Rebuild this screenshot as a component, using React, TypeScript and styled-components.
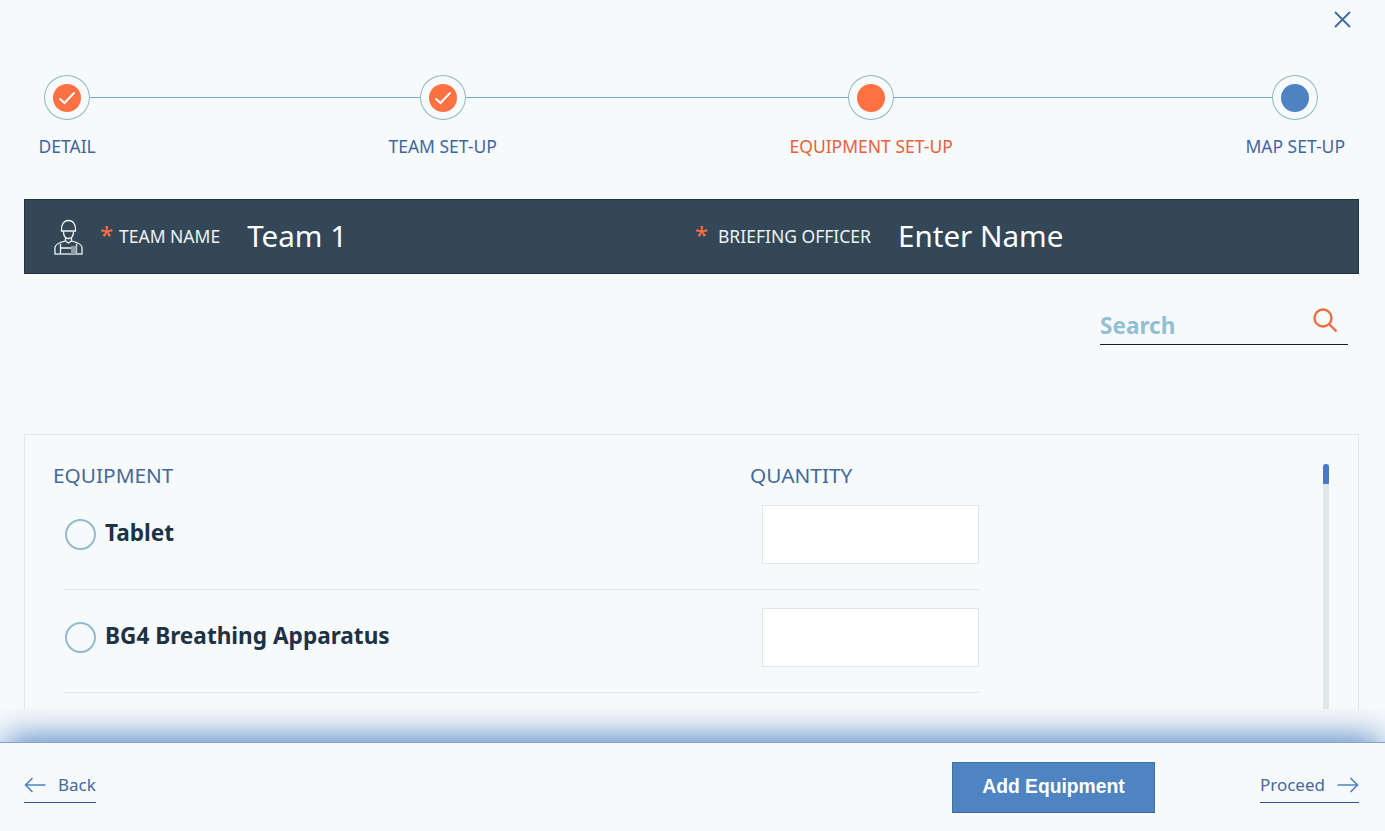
import React from 'react';
import styled, { createGlobalStyle } from 'styled-components';

// ---- palette ----
const PAGE = '#f7fafb';
const ORANGE = '#ff7043';
const BLUE = '#4f82c3';
const TEXT_BLUE = '#3f679f';

const GlobalStyle = createGlobalStyle`
  html, body { margin: 0; padding: 0; background: ${PAGE}; }
  * { box-sizing: border-box; }
`;

const Page = styled.div`
  width: 1385px;
  height: 831px;
  display: flex;
  flex-direction: column;
  overflow: hidden;
  background: ${PAGE};
  font-family: "Noto Sans", "Open Sans", sans-serif;
`;

const Main = styled.div`
  height: 709px;
  flex: none;
  overflow: hidden;
`;

const TopBar = styled.div`
  height: 75px;
  display: flex;
  justify-content: flex-end;
  align-items: flex-start;
  padding: 10px 33px 0 0;
`;

const CloseButton = styled.button`
  width: 19px;
  height: 19px;
  padding: 0;
  border: 0;
  background: none;
  color: #44699f;
  display: block;
`;

const Stepper = styled.div`
  position: relative;
  display: flex;
  justify-content: space-between;
  padding: 0 40px 0 38.5px;
  height: 124px;
`;

const StepLine = styled.div`
  position: absolute;
  top: 22px;
  left: 67px;
  right: 90px;
  height: 1px;
  background: #7ea7b9;
`;

const Step = styled.div`
  position: relative;
  display: flex;
  flex-direction: column;
  align-items: center;
`;

const Ring = styled.div`
  width: 46px;
  height: 45px;
  border: 1px solid #8fb6c2;
  border-radius: 50%;
  background: ${PAGE};
  display: flex;
  align-items: center;
  justify-content: center;
`;

const Dot = styled.div<{ $color: string }>`
  width: 28px;
  height: 28px;
  border-radius: 50%;
  background: ${(p) => p.$color};
  display: flex;
  align-items: center;
  justify-content: center;
`;

const StepLabel = styled.div<{ $active?: boolean }>`
  margin-top: 15px;
  font-size: 17.5px;
  line-height: 22px;
  white-space: nowrap;
  color: ${(p) => (p.$active ? '#e9603a' : TEXT_BLUE)};
`;

const TeamBar = styled.div`
  height: 75px;
  margin: 0 26px 0 24px;
  background: #334756;
  border: 1px solid #22333f;
  display: flex;
  align-items: center;
  padding: 0 0 2px 28px;
  color: #fff;
`;

const WorkerIcon = styled.svg`
  width: 32px;
  height: 36px;
  flex: none;
  margin: 2px 15px 0 0;
`;

const Field = styled.div<{ $width?: number }>`
  display: flex;
  align-items: center;
  width: ${(p) => (p.$width ? `${p.$width}px` : 'auto')};
`;

const Star = styled.span<{ $width: number }>`
  color: ${ORANGE};
  font-size: 24px;
  line-height: 24px;
  width: ${(p) => p.$width}px;
  margin-top: -2px;
`;

const FieldLabel = styled.span`
  font-size: 17.5px;
  color: #eef3f6;
  white-space: nowrap;
`;

const FieldValue = styled.span`
  font-size: 29.6px;
  line-height: 40px;
  color: #fff;
  white-space: nowrap;
  margin-left: 27px;
`;

const SearchRow = styled.div`
  height: 160px;
  display: flex;
  justify-content: flex-end;
  padding: 33px 37px 0 0;
`;

const SearchBox = styled.div`
  width: 248px;
  height: 38px;
  border-bottom: 1px solid #17202a;
  display: flex;
  align-items: flex-start;
  justify-content: space-between;
  padding-right: 10px;
`;

const SearchText = styled.span`
  font-size: 22.6px;
  line-height: 37px;
  font-weight: 700;
  color: #93bfd3;
`;

const SearchIcon = styled.svg`
  width: 25px;
  height: 25px;
  margin-top: 1px;
`;

const Panel = styled.section`
  position: relative;
  margin: 0 26px 0 24px;
  height: 320px;
  border: 1px solid #e0e7e9;
  padding: 28px 0 0 28px;
`;

const ColumnHeads = styled.div`
  display: flex;
  height: 24px;
  font-size: 20.8px;
  line-height: 25px;
  color: #44699a;
`;

const ColumnHead = styled.div<{ $width?: number }>`
  width: ${(p) => (p.$width ? `${p.$width}px` : 'auto')};
`;

const Row = styled.div`
  width: 915px;
  height: 103px;
  margin-left: 11px;
  border-bottom: 1px solid #dfe5e8;
  display: flex;
  align-items: flex-start;
  padding: 18px 0 0 1px;
`;

const Radio = styled.span`
  width: 31px;
  height: 31px;
  margin-top: 14px;
  flex: none;
  border: 2px solid #90bccb;
  border-radius: 50%;
`;

const RowName = styled.span`
  margin: 13px 0 0 9px;
  font-size: 22.6px;
  line-height: 30px;
  font-weight: 700;
  color: #1e3246;
  white-space: nowrap;
`;

const Quantity = styled.input`
  margin-left: auto;
  width: 217px;
  height: 59px;
  background: #fff;
  border: 1px solid #dfe5e8;
  border-radius: 0;
  outline: none;
`;

const ScrollTrack = styled.div`
  position: absolute;
  top: 29px;
  right: 29px;
  bottom: 0;
  width: 6px;
  background: #dfe8e8;
`;

const ScrollThumb = styled.div`
  height: 20px;
  background: #4a78c6;
  border-radius: 3px 3px 1px 1px;
`;

// opaque strip above the footer, the blue glow rises out of the footer edge
const Fade = styled.div`
  position: relative;
  height: 34px;
  flex: none;
  overflow: hidden;
  background: ${PAGE};
  border-bottom: 1px solid #86a3c7;

  &::after {
    content: '';
    position: absolute;
    left: 8px;
    right: 8px;
    top: 100%;
    height: 40px;
    box-shadow: 0 0 34px 3px rgba(61, 116, 190, 0.95);
  }
`;

const Footer = styled.footer`
  flex: 1;
  display: flex;
  align-items: flex-start;
  padding: 19px 26px 0 24px;
`;

const NavLink = styled.a`
  display: flex;
  align-items: center;
  height: 41px;
  padding-top: 5px;
  border-bottom: 1px solid #2b5790;
  font-size: 17px;
  color: #45689f;
`;

const Arrow = styled.svg<{ $side: 'left' | 'right' }>`
  width: 22px;
  height: 16px;
  ${(p) => (p.$side === 'left' ? 'margin-right: 12px;' : 'margin-left: 12px;')}
`;

const AddButton = styled.button`
  width: 203px;
  height: 51px;
  margin: 0 105px 0 auto;
  padding: 0 0 2px;
  background: #4f84c2;
  border: 1px solid #41709f;
  border-bottom-color: #3f6897;
  color: #fff;
  font-family: "Liberation Sans", Arial, sans-serif;
  font-size: 19.3px;
  font-weight: 700;
`;

const steps = [
  { label: 'DETAIL', done: true },
  { label: 'TEAM SET-UP', done: true },
  { label: 'EQUIPMENT SET-UP', active: true },
  { label: 'MAP SET-UP' },
];

const equipment = ['Tablet', 'BG4 Breathing Apparatus'];

const Check = () => (
  <svg width="20" height="16" viewBox="0 0 20 16" fill="none">
    <path d="M2.5 8.5 L7.5 13 L17.5 2.5" stroke="#fff" strokeWidth="2" />
  </svg>
);

const Worker = () => (
  <WorkerIcon viewBox="0 0 32 36" fill="none" stroke="#f2f5f7" strokeWidth="1.3">
    <path d="M8.5 12 C8 5 11 1.5 15.5 1.5 C20 1.5 23 5 22.5 12 Z" />
    <path d="M10.5 12.5 C10.5 17 12.5 19.5 15.5 19.5 C18.5 19.5 20.5 17 20.5 12.5" />
    <path d="M12.5 19 V22 L15.5 24 L18.5 22 V19" />
    <path d="M2 35 V28.5 C2 25.5 5 24 12 22 M29 35 V28.5 C29 25.5 26 24 19 22" />
    <path d="M1.5 35 H29.5" />
    <path d="M7.5 35 V25 M23.5 35 V25 M7.5 29 H23.5" />
    <path d="M18 27 H23.5 V35 H18 Z" fill="#8f9ca6" stroke="none" />
  </WorkerIcon>
);

export default function App() {
  return (
    <Page>
      <GlobalStyle />
      <Main>
        <TopBar>
          <CloseButton aria-label="Close">
            <svg width="19" height="19" viewBox="0 0 19 19" fill="none">
              <path d="M2 2 L17 17 M17 2 L2 17" stroke="currentColor" strokeWidth="1.8" />
            </svg>
          </CloseButton>
        </TopBar>

        <Stepper>
          <StepLine />
          {steps.map((s) => (
            <Step key={s.label}>
              <Ring>
                <Dot $color={s.done || s.active ? ORANGE : BLUE}>{s.done && <Check />}</Dot>
              </Ring>
              <StepLabel $active={s.active}>{s.label}</StepLabel>
            </Step>
          ))}
        </Stepper>

        <TeamBar>
          <Worker />
          <Field $width={595}>
            <Star $width={19}>*</Star>
            <FieldLabel>TEAM NAME</FieldLabel>
            <FieldValue>Team 1</FieldValue>
          </Field>
          <Field>
            <Star $width={23}>*</Star>
            <FieldLabel>BRIEFING OFFICER</FieldLabel>
            <FieldValue>Enter Name</FieldValue>
          </Field>
        </TeamBar>

        <SearchRow>
          <SearchBox>
            <SearchText>Search</SearchText>
            <SearchIcon viewBox="0 0 25 25" fill="none" stroke="#f26a3d" strokeWidth="2.4">
              <circle cx="10" cy="10" r="8.5" />
              <path d="M16 16 L23.5 23.5" />
            </SearchIcon>
          </SearchBox>
        </SearchRow>

        <Panel>
          <ColumnHeads>
            <ColumnHead $width={697}>EQUIPMENT</ColumnHead>
            <ColumnHead>QUANTITY</ColumnHead>
          </ColumnHeads>
          {equipment.map((name) => (
            <Row key={name}>
              <Radio />
              <RowName>{name}</RowName>
              <Quantity />
            </Row>
          ))}
          <ScrollTrack>
            <ScrollThumb />
          </ScrollTrack>
        </Panel>
      </Main>

      <Fade />

      <Footer>
        <NavLink>
          <Arrow $side="left" viewBox="0 0 22 16" fill="none" stroke={BLUE} strokeWidth="1.6">
            <path d="M21.5 8 H1.5 M8.5 1 L1.5 8 L8.5 15" />
          </Arrow>
          Back
        </NavLink>
        <AddButton>Add Equipment</AddButton>
        <NavLink>
          Proceed
          <Arrow $side="right" viewBox="0 0 22 16" fill="none" stroke={BLUE} strokeWidth="1.6">
            <path d="M0.5 8 H20.5 M13.5 1 L20.5 8 L13.5 15" />
          </Arrow>
        </NavLink>
      </Footer>
    </Page>
  );
}
